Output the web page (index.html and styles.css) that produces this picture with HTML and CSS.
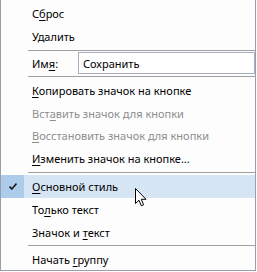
FILE: index.html
```html
<!DOCTYPE html>
<html>
<head>
<meta charset="utf-8">
<link rel="stylesheet" href="styles.css">
</head>
<body>
<div class="menu">
  <div class="item h23"><span class="check"></span><span class="label">С<u>б</u>рос</span></div>
  <div class="item h22"><span class="check"></span><span class="label">Удалить</span></div>
  <div class="sep sep-a"></div>
  <div class="name-row"><span class="label">Им<u>я</u>:</span><span class="field">Сохранить</span></div>
  <div class="sep sep-b"></div>
  <div class="item h23"><span class="check"></span><span class="label"><u>К</u>опировать значок на кнопке</span></div>
  <div class="item h22 disabled"><span class="check"></span><span class="label">Вст<u>а</u>вить значок для кнопки</span></div>
  <div class="item h23 disabled"><span class="check"></span><span class="label"><u>В</u>осстановить значок для кнопки</span></div>
  <div class="item h22"><span class="check"></span><span class="label"><u>И</u>зменить значок на кнопке...</span></div>
  <div class="sep sep-c"></div>
  <div class="item h23 hover"><span class="check on"><svg width="8" height="7" viewBox="0 0 8 7"><path d="M0.5 3.5 L2.8 6 L7.5 0.5" fill="none" stroke="#1a1a1a" stroke-width="1.6"/></svg></span><span class="label"><u>О</u>сновной стиль</span>
    <svg class="cursor" width="12" height="20" viewBox="0 0 12 20"><path d="M0.5 0.5 L0.5 15.5 L4 12.2 L6.3 17.8 L8.6 16.8 L6.3 11.3 L11 11.3 Z" fill="#fff" stroke="#000" stroke-width="1" stroke-linejoin="miter"/></svg>
  </div>
  <div class="item h23"><span class="check"></span><span class="label">То<u>л</u>ько текст</span></div>
  <div class="item h23"><span class="check"></span><span class="label">Значок и <u>т</u>екст</span></div>
  <div class="sep sep-d"></div>
  <div class="item h22"><span class="check"></span><span class="label">Начать <u>г</u>руппу</span></div>
</div>
</body>
</html>
```

FILE: styles.css
```css
html, body {
  margin: 0;
  padding: 0;
  background: #ffffff;
}
.menu {
  width: 256px;
  height: 271px;
  box-sizing: border-box;
  background: #fdfdfd;
  border-left: 1px solid #979eae;
  border-right: 1px solid #979eae;
  border-bottom: 1px solid #979eae;
  padding-top: 2px;
  display: flex;
  flex-direction: column;
  font-family: "Noto Sans", "Open Sans", sans-serif;
  font-size: 11px;
  color: #000;
}
.item {
  position: relative;
  display: flex;
  align-items: center;
  flex-shrink: 0;
}
.h23 { height: 23px; }
.h22 { height: 22px; }
.check {
  width: 23px;
  height: 100%;
  display: flex;
  align-items: center;
  justify-content: center;
  flex-shrink: 0;
}
.label {
  margin-left: 8px;
  white-space: nowrap;
}
u {
  text-decoration: underline;
  text-underline-offset: 2px;
}
.disabled {
  color: #8d8d8d;
}
.hover {
  background: #d6e5f4;
}
.check.on {
  background: #adcbea;
}
.cursor {
  position: absolute;
  left: 134px;
  top: 13px;
}
.sep {
  height: 1px;
  margin-left: 27px;
  background: #a0a0a0;
  flex-shrink: 0;
}
.sep-a { margin-top: 3px; margin-bottom: 1px; }
.sep-b { margin-top: 2px; margin-bottom: 2px; }
.sep-c { margin-top: 3px; margin-bottom: 2px; }
.sep-d { margin-top: 1px; margin-bottom: 2px; }
.name-row {
  height: 22px;
  display: flex;
  align-items: center;
  flex-shrink: 0;
  padding-left: 23px;
}
.field {
  margin-left: auto;
  height: 22px;
  width: 177px;
  box-sizing: border-box;
  border: 1px solid #a8b0c0;
  background: #fff;
  padding-left: 4px;
  display: flex;
  align-items: center;
}
```
